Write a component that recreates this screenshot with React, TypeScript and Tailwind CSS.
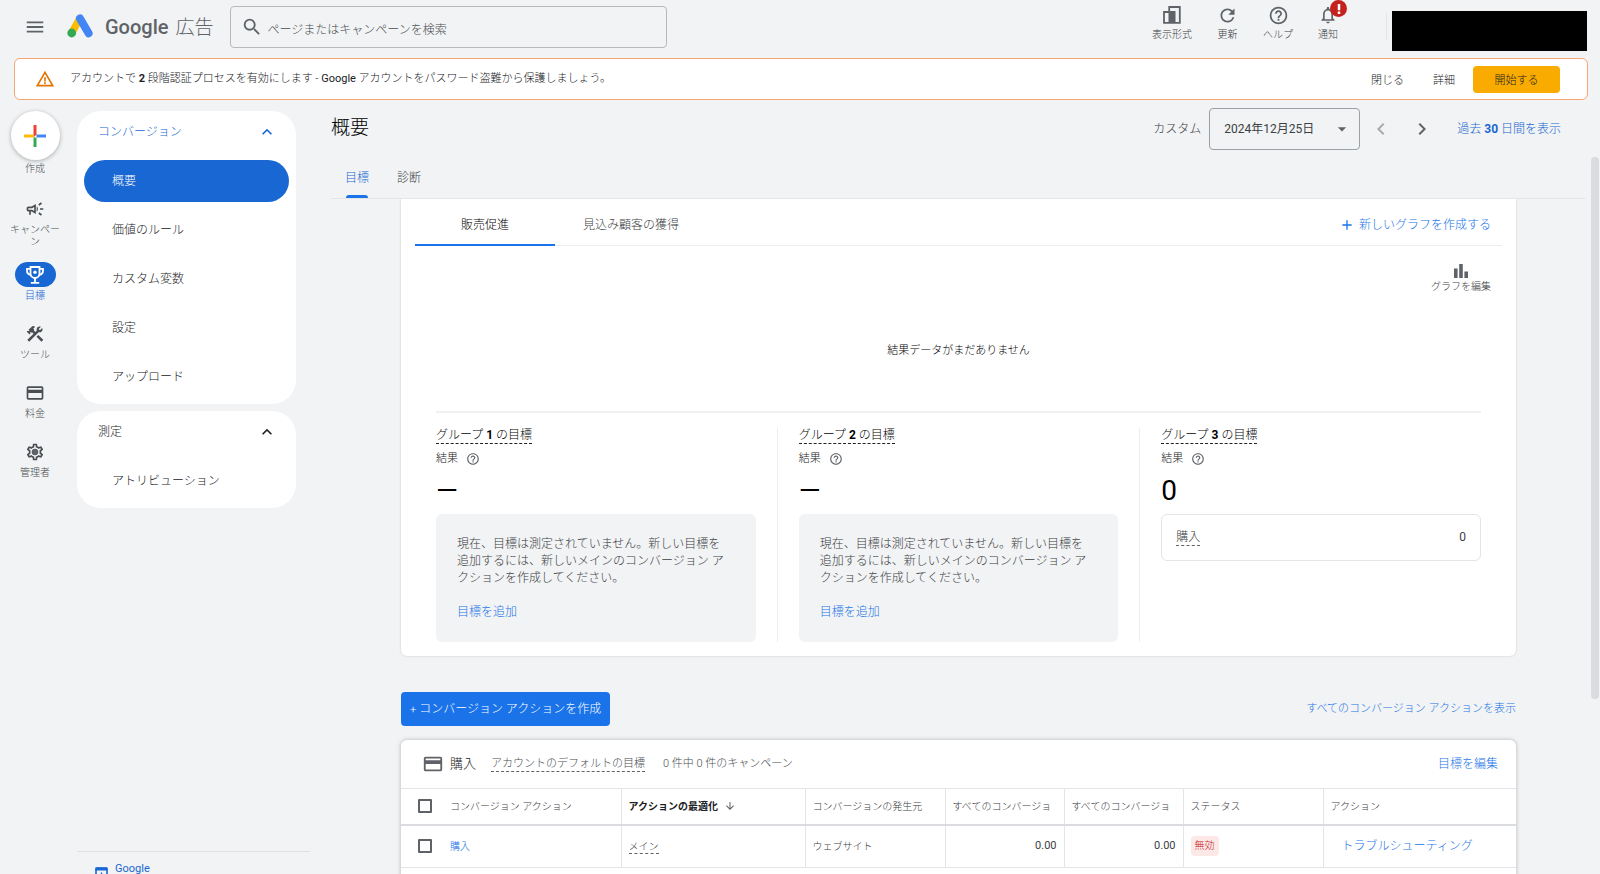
import type { ReactNode } from 'react';
import {
  MdAdd,
  MdArrowDownward,
  MdArrowDropDown,
  MdConstruction,
  MdExpandLess,
  MdHelpOutline,
  MdMenu,
  MdNavigateBefore,
  MdNavigateNext,
  MdNotificationsNone,
  MdOutlineCampaign,
  MdOutlineCreditCard,
  MdOutlineSettings,
  MdRefresh,
  MdSearch,
  MdWarningAmber,
} from 'react-icons/md';

const navItems = ['概要', '価値のルール', 'カスタム変数', '設定', 'アップロード'];

function AdsLogo() {
  return (
    <svg viewBox="0 0 26 24" className="h-6 w-[26px]" fill="none" strokeLinecap="round">
      <path d="M5 18.5 12.5 5" stroke="#fbbc04" strokeWidth="7.4" />
      <path d="M13 4.4 21.6 19.2" stroke="#4285f4" strokeWidth="8" />
      <circle cx="4.7" cy="19" r="4.4" fill="#34a853" />
    </svg>
  );
}

function LayoutIcon() {
  return (
    <svg viewBox="0 0 18 18" className="h-[18px] w-[18px]">
      <path d="M6.2 5V1h10.6v15.8H1V6h10.6v10.8" fill="none" stroke="#5f6368" strokeWidth="1.8" />
      <rect x="5.5" y="6" width="6.5" height="11" fill="#5f6368" />
    </svg>
  );
}

function TrophyIcon() {
  return (
    <svg viewBox="0 0 20 20" className="h-5 w-5" fill="none" stroke="#fff" strokeWidth="1.8">
      <path d="M5.5 2h9v6.5a4.5 4.5 0 0 1-9 0z" />
      <path d="M5.5 3.9H2v1.6c0 2.3 1.4 4 3.7 4.3M14.5 3.9H18v1.6c0 2.3-1.4 4-3.7 4.3" />
      <path d="M10 13v4.6M5.8 17.8h8.4" />
      <circle cx="10" cy="7.2" r="1.7" fill="#fff" stroke="none" />
    </svg>
  );
}

function BarsIcon() {
  return (
    <svg viewBox="0 0 14 14" className="h-3.5 w-3.5" fill="#5f6368">
      <path d="M0 4.5h3.6V14H0zM5.2 0h3.6v14H5.2zM10.4 7.5H14V14h-3.6z" />
    </svg>
  );
}

function CreatePlus() {
  return (
    <svg viewBox="0 0 22 22" className="h-[22px] w-[22px]">
      <path d="M9.5 0h3v9.5l-3 3z" fill="#ea4335" />
      <path d="M0 9.5h9.5v3H0z" fill="#fbbc04" />
      <path d="M12.5 9.5H22v3h-9.5z" fill="#4285f4" />
      <path d="M9.5 12.5h3V22h-3z" fill="#34a853" />
    </svg>
  );
}

function TopAction({ label, children }: { label: string; children: ReactNode }) {
  return (
    <button className="relative flex flex-col items-center text-[#5f6368]">
      <span className="flex h-5 items-center justify-center">{children}</span>
      <span className="mt-1 text-[10px] leading-3 text-[#3c4043]">{label}</span>
    </button>
  );
}

function RailItem({ label, active, children }: { label: string; active?: boolean; children: ReactNode }) {
  return (
    <button className={`flex min-h-[59px] w-14 flex-col items-center pb-3.5 ${active ? 'text-[#1967d2]' : 'text-[#4a4e52]'}`}>
      <span className={`flex h-[25px] w-[41px] items-center justify-center rounded-full ${active ? 'bg-[#1967d2]' : ''}`}>
        {children}
      </span>
      <span className="mt-[3px] text-[10px] leading-3">{label}</span>
    </button>
  );
}

function NavGroup({ title, items, current }: { title: string; items: string[]; current?: string }) {
  return (
    <section className="w-[219px] rounded-3xl bg-white px-[7px] pb-1.5">
      <button className={`flex h-[42px] w-full items-center justify-between pr-3 pl-3.5 text-xs ${current ? 'text-[#1967d2]' : 'text-[#202124]'}`}>
        {title}
        <MdExpandLess className="h-5 w-5" />
      </button>
      <ul className="mt-[7px] flex flex-col gap-[7px]">
        {items.map((item) => (
          <li key={item}>
            <a
              href="#"
              className={`flex h-[42px] items-center rounded-full px-7 text-xs ${
                item === current ? 'bg-[#1967d2] text-white' : 'text-[#202124]'
              }`}
            >
              {item}
            </a>
          </li>
        ))}
      </ul>
    </section>
  );
}

function GoalGroup({ no, value, children }: { no: number; value: string; children: ReactNode }) {
  return (
    <div className="flex flex-1 flex-col items-start">
      <h3 className="border-b border-dashed border-[#202124] text-xs leading-[15px] text-black">
        グループ <b className="font-bold">{no}</b> の目標
      </h3>
      <p className="mt-[7px] flex items-center gap-2 text-[11px] leading-4 text-[#202124]">
        結果 <MdHelpOutline className="h-3.5 w-3.5 text-[#5f6368]" />
      </p>
      <p className="mt-2 h-[39px] text-[28px] leading-[32px] font-normal text-black">{value}</p>
      {children}
    </div>
  );
}

function EmptyGoal() {
  return (
    <div className="w-full rounded-md bg-[#f1f3f4] pt-[22px] pr-6 pb-[21px] pl-[21px] text-xs leading-[17px]">
      <p className="text-[#3c4043]">
        現在、目標は測定されていません。新しい目標を追加するには、新しいメインのコンバージョン アクションを作成してください。
      </p>
      <a href="#" className="mt-[17px] block text-[#1a73e8]">目標を追加</a>
    </div>
  );
}

function TopBar() {
  return (
    <header className="flex h-[58px] shrink-0 items-start pr-[13px] pl-6">
      <button aria-label="メニュー" className="mt-4 text-[#5f6368]">
        <MdMenu className="h-[22px] w-[22px]" />
      </button>
      <div className="mt-3.5 ml-[21px] flex h-6 items-center whitespace-nowrap text-[#5f6368]">
        <AdsLogo />
        <span className="ml-3 pt-0.5 text-xl leading-6 font-medium">Google</span>
        <span className="ml-[7px] pt-1 text-[19px] leading-6">広告</span>
      </div>
      <label className="mt-1.5 ml-[17px] flex h-[42px] w-[437px] items-center rounded-sm border border-[#b6b9bd] pl-2.5">
        <MdSearch className="h-[22px] w-[22px] text-[#5f6368]" />
        <input
          type="text"
          aria-label="検索"
          placeholder="ページまたはキャンペーンを検索"
          className="ml-1 flex-1 bg-transparent pt-1.5 text-xs outline-none placeholder:text-[#4a4e52]"
        />
      </label>
      <div className="mt-[5px] ml-auto flex gap-[25px]">
        <TopAction label="表示形式"><LayoutIcon /></TopAction>
        <TopAction label="更新"><MdRefresh className="h-[21px] w-[21px]" /></TopAction>
        <TopAction label="ヘルプ"><MdHelpOutline className="h-[21px] w-[21px]" /></TopAction>
        <TopAction label="通知">
          <MdNotificationsNone className="h-5 w-5" />
          <span className="absolute -top-[5px] left-3 flex h-[17px] w-[17px] items-center justify-center rounded-full bg-[#c5221f]">
            <svg viewBox="0 0 4 12" className="h-2.5 w-1" fill="#fff">
              <path d="M.5 0h3v7.5h-3zM.5 9h3v3h-3z" />
            </svg>
          </span>
        </TopAction>
      </div>
      <div className="mt-[13px] ml-12 h-7 w-px bg-[#e3e5e8]" />
      <div className="mt-[11px] ml-[5px] h-10 w-[195px] bg-black" />
    </header>
  );
}

function SecurityBanner() {
  return (
    <div className="mr-3 ml-3.5 flex h-[42px] shrink-0 items-center rounded-md border border-[#f6a673] bg-white pr-[27px] pl-5 text-[11px] text-[#202124]">
      <MdWarningAmber className="h-5 w-5 text-[#e37400]" />
      <p className="ml-[15px]">
        アカウントで <b className="font-bold">2</b> 段階認証プロセスを有効にします - <span className="font-normal">Google</span> アカウントをパスワード盗難から保護しましょう。
      </p>
      <button className="ml-auto pt-1">閉じる</button>
      <button className="ml-[29px] pt-1">詳細</button>
      <button className="ml-[18px] h-[27px] w-[87px] rounded-sm bg-[#f9ab00] pt-1">開始する</button>
    </div>
  );
}

function Rail() {
  return (
    <nav className="flex w-[70px] shrink-0 flex-col items-center pt-[11px]">
      <button className="mb-[21px] flex flex-col items-center text-[#4a4e52]">
        <span className="flex h-[49px] w-[49px] items-center justify-center rounded-full bg-white shadow-[0_1px_4px_rgba(60,64,67,0.4)]">
          <CreatePlus />
        </span>
        <span className="mt-[3px] text-[10px] leading-3">作成</span>
      </button>
      <RailItem label="キャンペーン"><MdOutlineCampaign className="h-5 w-5" /></RailItem>
      <RailItem label="目標" active><TrophyIcon /></RailItem>
      <RailItem label="ツール"><MdConstruction className="h-5 w-5" /></RailItem>
      <RailItem label="料金"><MdOutlineCreditCard className="h-5 w-5" /></RailItem>
      <RailItem label="管理者">
        <span className="relative flex items-center justify-center">
          <MdOutlineSettings className="h-5 w-5" />
          <span className="absolute h-1.5 w-1.5 rounded-full bg-[#5f6368]" />
        </span>
      </RailItem>
    </nav>
  );
}

function SideNav() {
  return (
    <aside className="ml-[7px] flex w-[233px] shrink-0 flex-col gap-[7px] overflow-hidden pt-[11px]">
      <NavGroup title="コンバージョン" items={navItems} current="概要" />
      <NavGroup title="測定" items={['アトリビューション']} />
      <a href="#" className="mt-auto flex h-[23px] shrink-0 items-start border-t border-[#dfe1e5] pt-[9px] pl-[18px] text-[11px] leading-4 font-normal text-[#1967d2]">
        <svg viewBox="0 0 13 16" className="mt-1.5 h-4 w-[13px] shrink-0" fill="none" stroke="#1967d2">
          <rect x="1" y="1" width="11" height="14" rx="1" strokeWidth="1.6" />
          <path d="M.5 2h12" strokeWidth="3" />
          <path d="M6.5 5.5v5" strokeWidth="1.4" />
        </svg>
        <span className="ml-[7px]">Google</span>
      </a>
    </aside>
  );
}

function ResultsCard() {
  return (
    <section className="rounded-b-md bg-white pb-3.5 shadow-[0_0_2px_rgba(60,64,67,0.25)]">
      <div className="mx-3.5 flex h-[47px] items-stretch border-b border-[#eceef0] text-xs">
        <button className="-mb-px w-[140px] border-b-2 border-[#1a73e8] pt-[7px] text-black">販売促進</button>
        <button className="px-7 pt-[5px] text-[#3c4043]">見込み顧客の獲得</button>
        <a href="#" className="mr-[11px] ml-auto flex items-center gap-1 pt-[5px] text-[#1a73e8]">
          <MdAdd className="h-4 w-4" />
          新しいグラフを作成する
        </a>
      </div>
      <div className="flex justify-end pt-[18px] pr-[25px]">
        <button className="flex flex-col items-center gap-px text-[10px] leading-4 text-[#3c4043]">
          <BarsIcon />
          グラフを編集
        </button>
      </div>
      <p className="mt-12 text-center text-[11px] leading-4 text-black">結果データがまだありません</p>
      <div className="mx-[35px] mt-[52px] flex gap-[21px] border-t-2 border-[#eff1f2] pt-[15px]">
        <GoalGroup no={1} value="—"><EmptyGoal /></GoalGroup>
        <div className="w-px bg-[#eceef0]" />
        <GoalGroup no={2} value="—"><EmptyGoal /></GoalGroup>
        <div className="w-px bg-[#eceef0]" />
        <GoalGroup no={3} value="0">
          <div className="flex h-[47px] w-full items-center justify-between rounded-md border border-[#e3e5e8] px-3.5 text-xs leading-[15px] text-[#3c4043]">
            <span className="border-b border-dashed border-[#5f6368]">購入</span>
            <span className="font-normal">0</span>
          </div>
        </GoalGroup>
      </div>
    </section>
  );
}

function ActionsTable() {
  const th = 'border-l border-[#e3e5e8] px-[7px] text-left font-light whitespace-nowrap';
  const td = 'border-l border-[#e3e5e8] px-[7px]';
  return (
    <section className="mt-3.5 min-h-[200px] rounded-t-md bg-white shadow-[0_0_4px_rgba(60,64,67,0.35)]">
      <div className="flex h-12 items-center pr-[18px] pl-[21px] text-[11px] text-[#4a4e52]">
        <MdOutlineCreditCard className="h-[22px] w-[22px] text-[#5f6368]" />
        <h2 className="ml-1.5 text-[13px] text-[#202124]">購入</h2>
        <span className="ml-[15px] border-b border-dashed border-[#5f6368] leading-[15px]">アカウントのデフォルトの目標</span>
        <span className="ml-[18px]">0 件中 0 件のキャンペーン</span>
        <a href="#" className="ml-auto text-xs text-[#1a73e8]">目標を編集</a>
      </div>
      <table className="w-full table-fixed border-collapse text-[10px] text-[#3c4043]">
        <colgroup>
          <col className="w-[49px]" />
          <col className="w-[171px]" />
          <col className="w-[184px]" />
          <col className="w-[140px]" />
          <col className="w-[119px]" />
          <col className="w-[119px]" />
          <col className="w-[140px]" />
          <col />
        </colgroup>
        <thead>
          <tr className="h-9 border-t border-b-2 border-t-[#e3e5e8] border-b-[#dadce0]">
            <th className="pl-[17px] text-left">
              <input type="checkbox" aria-label="すべて選択" className="block h-3.5 w-3.5 appearance-none rounded-[1px] border-2 border-[#5f6368]" />
            </th>
            <th className="text-left font-light">コンバージョン アクション</th>
            <th className={th}>
              <span className="flex items-center gap-1.5 font-bold text-[#202124]">
                アクションの最適化 <MdArrowDownward className="h-3 w-3 text-[#5f6368]" />
              </span>
            </th>
            <th className={th}>コンバージョンの発生元</th>
            <th className={th}>すべてのコンバージョ</th>
            <th className={th}>すべてのコンバージョ</th>
            <th className={th}>ステータス</th>
            <th className={th}>アクション</th>
          </tr>
        </thead>
        <tbody>
          <tr className="h-[43px] border-b border-[#e3e5e8]">
            <td className="pl-[17px]">
              <input type="checkbox" aria-label="購入を選択" className="block h-3.5 w-3.5 appearance-none rounded-[1px] border-2 border-[#5f6368]" />
            </td>
            <td><a href="#" className="text-[#1a73e8]">購入</a></td>
            <td className={td}><span className="border-b border-dashed border-[#5f6368] pb-px">メイン</span></td>
            <td className={td}>ウェブサイト</td>
            <td className={`${td} text-right text-[11px] font-normal`}>0.00</td>
            <td className={`${td} text-right text-[11px] font-normal`}>0.00</td>
            <td className={td}><span className="inline-block rounded-sm bg-[#fce8e6] px-1 leading-5 text-[#c5221f]">無効</span></td>
            <td className={`${td} text-xs`}><a href="#" className="ml-[11px] text-[#1a73e8]">トラブルシューティング</a></td>
          </tr>
        </tbody>
      </table>
    </section>
  );
}

function Overview() {
  return (
    <main className="ml-[21px] flex min-w-0 flex-1 flex-col pt-2 pr-3.5">
      <div className="flex h-[42px] items-center pr-[25px] text-xs">
        <h1 className="self-start pt-2 text-[19px] leading-6 text-black">概要</h1>
        <label htmlFor="period" className="ml-auto text-[#3c4043]">カスタム</label>
        <div className="relative ml-2">
          <select id="period" className="h-[42px] w-[151px] appearance-none rounded-sm border border-[#9aa0a6] bg-transparent pl-3.5 text-xs font-normal text-[#3c4043]">
            <option>2024年12月25日</option>
          </select>
          <MdArrowDropDown className="pointer-events-none absolute top-[11px] right-2 h-5 w-5 text-[#5f6368]" />
        </div>
        <button aria-label="前へ" className="ml-[9px] text-[#a6abb0]"><MdNavigateBefore className="h-6 w-6" /></button>
        <button aria-label="次へ" className="ml-[17px] text-[#5f6368]"><MdNavigateNext className="h-6 w-6" /></button>
        <a href="#" className="ml-[23px] text-[#1967d2]">過去 <b className="font-bold">30</b> 日間を表示</a>
      </div>
      <div className="flex h-[49px] shrink-0 gap-7 border-b border-[#e3e5e8] pl-3.5 text-xs">
        <button className="relative pt-[7px] text-[#1967d2]">
          目標
          <span className="absolute inset-x-px bottom-0 h-[3px] rounded-t-sm bg-[#1a73e8]" />
        </button>
        <button className="pt-[7px] text-[#3c4043]">診断</button>
      </div>
      <div className="min-h-0 flex-1 overflow-y-auto px-[70px] [scrollbar-width:none]">
        <ResultsCard />
        <div className="mt-9 flex items-center justify-between">
          <button className="h-[34px] rounded-sm bg-[#1a73e8] px-[9px] text-xs text-white">
            <span className="text-[11px]">+</span> コンバージョン アクションを作成
          </button>
          <a href="#" className="text-[11px] text-[#1a73e8]">すべてのコンバージョン アクションを表示</a>
        </div>
        <ActionsTable />
      </div>
    </main>
  );
}

export default function App() {
  return (
    <div className="flex h-screen flex-col overflow-hidden bg-[#f1f3f4] font-[Roboto,'Noto_Sans_CJK_JP',sans-serif] font-light" lang="ja">
      <TopBar />
      <SecurityBanner />
      <div className="relative flex min-h-0 flex-1">
        <Rail />
        <SideNav />
        <Overview />
        <div className="absolute top-[57px] right-px h-[542px] w-2 rounded-full bg-[#dadce0]" />
      </div>
    </div>
  );
}
